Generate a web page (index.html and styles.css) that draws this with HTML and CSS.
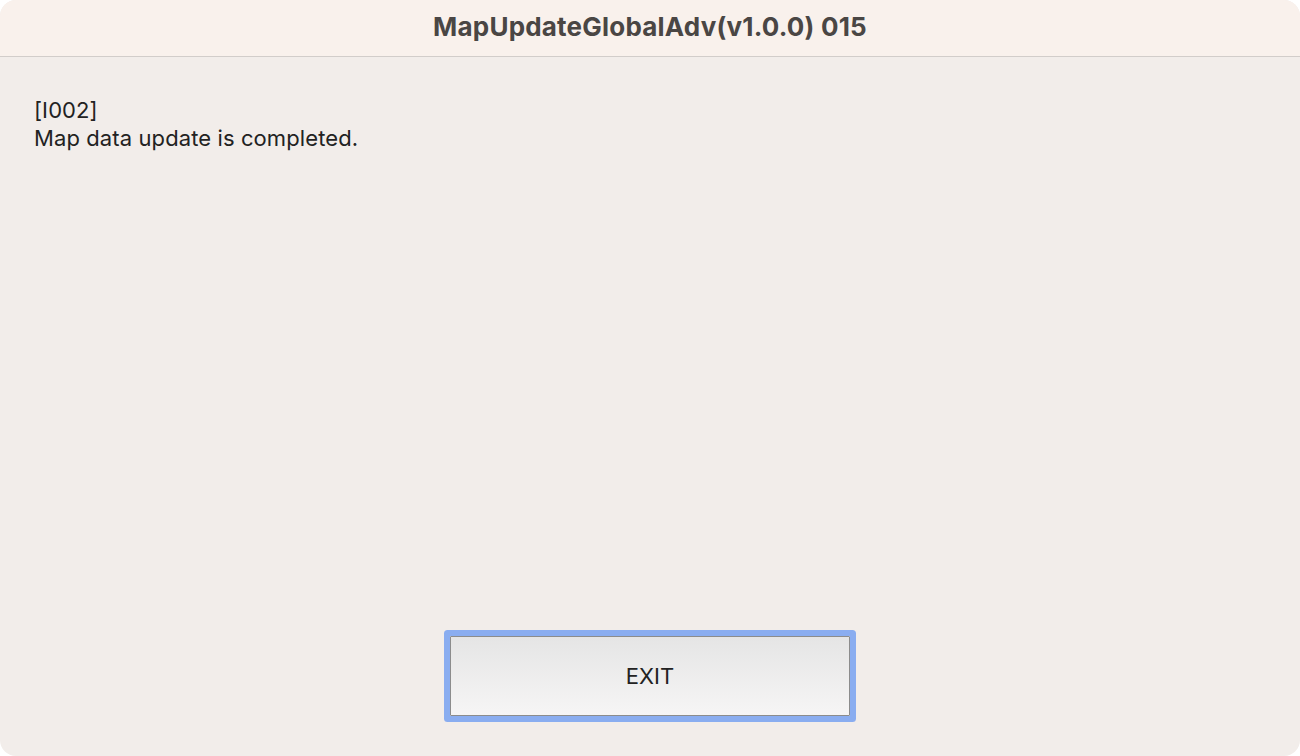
FILE: index.html
```html
<!DOCTYPE html>
<html>
  <head>
    <meta name="viewport" content="width=device-width, initial-scale=1" />
    <title>MapUpdateGlobalAdv(v1.0.0) 015</title>
    <link rel="stylesheet" href="styles.css">
  </head>

  <body>
    <div id="window">
      <div id="titlebar">MapUpdateGlobalAdv(v1.0.0) 015</div>
      <div id="content">
        <p id="message">[I002]<br />Map data update is completed.</p>
        <div id="actions">
          <button id="exit-button">EXIT</button>
        </div>
      </div>
    </div>
  </body>
</html>
```

FILE: styles.css
```css
* {
  box-sizing: border-box;
}

html,
body {
  margin: 0;
  height: 100%;
  background-color: white;
}

body {
  font-family: Inter, "Noto Sans", sans-serif;
  color: #222;
}

#window {
  display: flex;
  flex-direction: column;
  width: 1300px;
  height: 756px;
  border-radius: 16px;
  overflow: hidden;
  background-color: #f2edea;
}

#titlebar {
  height: 57px;
  flex-shrink: 0;
  display: flex;
  align-items: center;
  justify-content: center;
  padding-bottom: 3px;
  background-color: #f9f1ec;
  border-bottom: 1px solid #d2cdca;
  font-size: 26px;
  font-weight: 700;
  color: #4a4644;
  letter-spacing: 0.2px;
}

#content {
  flex: 1;
  display: flex;
  flex-direction: column;
  padding: 39px 34px 40px 34px;
}

#message {
  flex: 1;
  margin: 0;
  font-size: 22px;
  line-height: 28px;
  color: #222;
  letter-spacing: 0.1px;
}

#actions {
  display: flex;
  justify-content: center;
}

/* focused button: blue ring around a grey bevel */
#exit-button {
  width: 400px;
  height: 80px;
  border: 1px solid #8c8c8c;
  border-radius: 1px;
  box-shadow: 0 0 0 6px #8aadf0;
  background: linear-gradient(#e5e5e5, #f6f5f5);
  font-family: Inter, "Noto Sans", sans-serif;
  font-size: 22px;
  color: #222;
  cursor: pointer;
}
```
